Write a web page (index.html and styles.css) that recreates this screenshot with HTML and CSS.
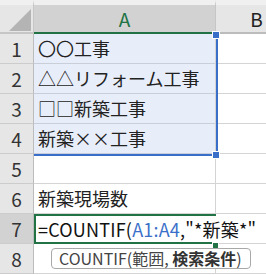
FILE: index.html
```html
<!DOCTYPE html>
<html lang="ja">
<head>
    <meta charset="UTF-8">
    <title>COUNTIF</title>
    <link rel="stylesheet" href="styles.css">
</head>
<body>

    <div class="frame">
    <div class="sheet">
        <!-- 見出し行 -->
        <div class="corner"><span class="tri"></span></div>
        <div class="colhead active">A</div>
        <div class="colhead">B</div>

        <div class="rowhead">1</div>
        <div class="cell ref">〇〇工事</div>
        <div class="cell"></div>

        <div class="rowhead">2</div>
        <div class="cell ref">△△リフォーム工事</div>
        <div class="cell"></div>

        <div class="rowhead">3</div>
        <div class="cell ref">□□新築工事</div>
        <div class="cell"></div>

        <div class="rowhead">4</div>
        <div class="cell ref">新築××工事</div>
        <div class="cell"></div>

        <div class="rowhead">5</div>
        <div class="cell"></div>
        <div class="cell"></div>

        <div class="rowhead">6</div>
        <div class="cell">新築現場数</div>
        <div class="cell"></div>

        <div class="rowhead active">7</div>
        <div class="cell editing">=COUNTIF(<span class="refText">A1:A4</span>,"*新築*"</div>
        <div class="cell next"></div>

        <div class="rowhead">8</div>
        <div class="cell"></div>
        <div class="cell"></div>

        <!-- 参照範囲の枠 -->
        <div class="refBox">
            <span class="handle topHandle"></span>
            <span class="handle bottomHandle"></span>
        </div>

        <div class="fillHandle"></div>

        <div class="tip">COUNTIF(範囲, <b>検索条件</b>)</div>
    </div>
    </div>

</body>
</html>
```

FILE: styles.css
```css
body {
    margin: 0;
    background: #ffffff;
    font-family: "Noto Sans CJK JP", "Noto Sans", sans-serif;
    overflow: hidden;
}
.frame {
    width: 266px;
    height: 275px;
    overflow: hidden;
}
.sheet {
    position: relative;
    display: grid;
    grid-template-columns: 34px 182px 82px;
    grid-template-rows: 34px repeat(8, 30px);
    background: #ffffff;
}
.corner {
    position: relative;
    background: #e6e6e6;
    border-top: 5px solid #f0f0f0;
    border-right: 1px solid #c6c6c6;
    border-bottom: 2px solid #c6c6c6;
    box-sizing: border-box;
}
.tri {
    position: absolute;
    right: 2px;
    bottom: 1px;
    width: 0;
    height: 0;
    border-left: 22px solid transparent;
    border-bottom: 22px solid #b4b4b4;
}
.colhead {
    background: #e6e6e6;
    border-top: 5px solid #f0f0f0;
    border-right: 1px solid #c6c6c6;
    border-bottom: 2px solid #bcbcbc;
    box-sizing: border-box;
    text-align: center;
    font-size: 19px;
    line-height: 27px;
    color: #222;
}
.colhead.active {
    background: #d2d2d2;
    border-bottom-color: #217346;
    color: #217346;
}
.rowhead {
    background: #e6e6e6;
    border-right: 1px solid #bcbcbc;
    border-bottom: 1px solid #cccccc;
    box-sizing: border-box;
    text-align: center;
    font-size: 19px;
    line-height: 29px;
    color: #333;
}
.rowhead.active {
    background: #d2d2d2;
}
.cell {
    border-right: 1px solid #d4d4d4;
    border-bottom: 1px solid #d4d4d4;
    box-sizing: border-box;
    padding-left: 4px;
    font-size: 18px;
    line-height: 29px;
    color: #222;
    white-space: nowrap;
    min-width: 0;
}
.cell.ref {
    background: #e8eef9;
    border-bottom-color: #c9ced8;
}
.cell.editing {
    position: relative;
    z-index: 2;
    overflow: visible;
    border: none;
    border-top: 2px solid #217346;
    border-bottom: 2px solid #217346;
    border-left: 2px solid #217346;
    padding-left: 2px;
    line-height: 26px;
    letter-spacing: 0.2px;
    color: #111;
}
.cell.next {
    border-right: none;
}
.refText {
    color: #3a6fc9;
}
.refBox {
    position: absolute;
    left: 34px;
    top: 34px;
    width: 184px;
    height: 122px;
    box-sizing: border-box;
    border-right: 2px solid #3a6fc9;
    border-bottom: 2px solid #3a6fc9;
    pointer-events: none;
}
.handle {
    position: absolute;
    width: 6px;
    height: 6px;
    background: #3a6fc9;
    border: 1px solid #ffffff;
}
.topHandle {
    right: -4px;
    top: -3px;
}
.bottomHandle {
    right: -4px;
    bottom: -5px;
}
.fillHandle {
    position: absolute;
    left: 212px;
    top: 242px;
    width: 5px;
    height: 5px;
    background: #217346;
    border: 1px solid #ffffff;
    z-index: 3;
}
.tip {
    position: absolute;
    left: 51px;
    top: 248px;
    width: 200px;
    height: 21px;
    box-sizing: border-box;
    background: #ffffff;
    border: 1px solid #a8a8a8;
    border-radius: 4px;
    padding-left: 7px;
    font-size: 16px;
    line-height: 19px;
    color: #444;
    white-space: nowrap;
    z-index: 4;
}
.tip b {
    color: #333;
}
```
